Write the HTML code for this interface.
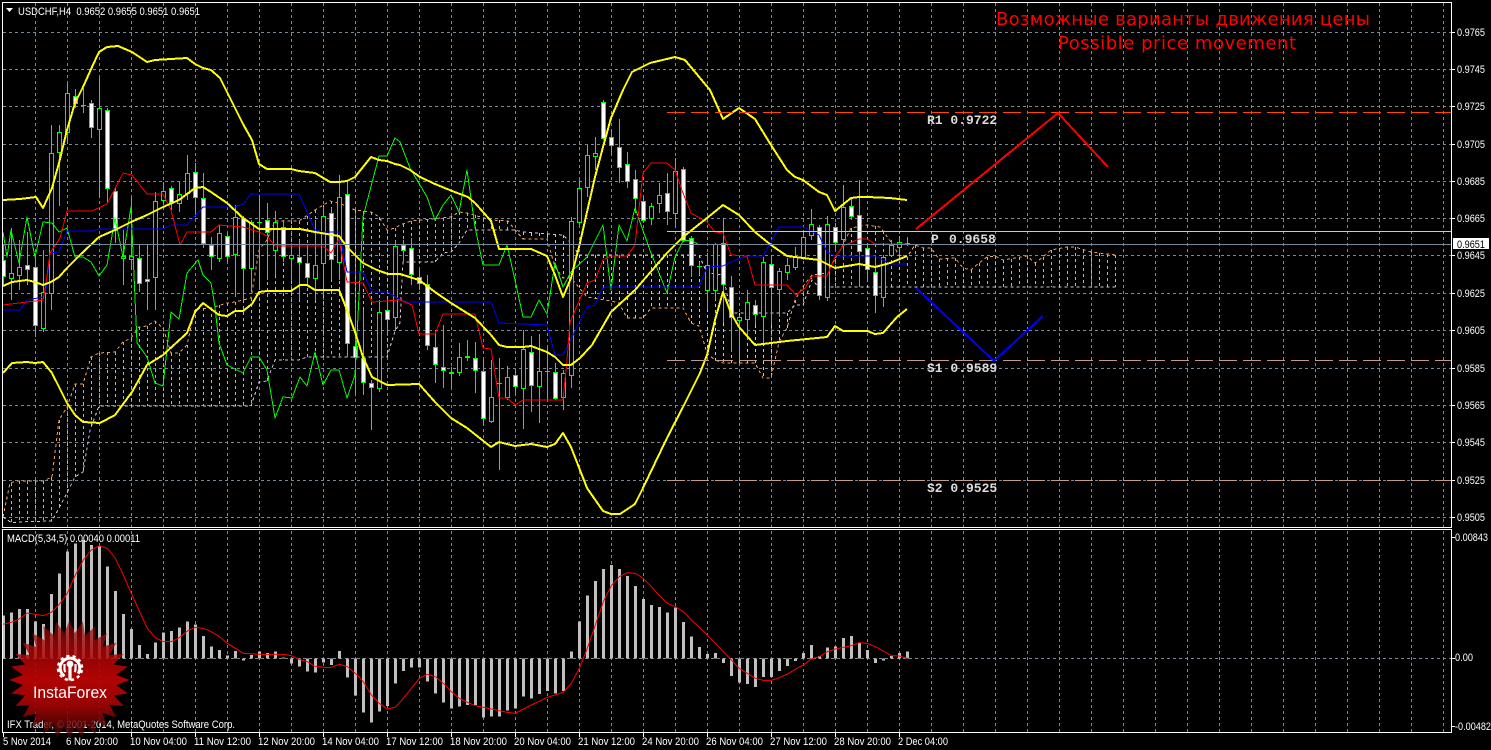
<!DOCTYPE html>
<html><head><meta charset="utf-8"><title>USDCHF,H4</title>
<style>
html,body{margin:0;padding:0;background:#000;width:1491px;height:750px;overflow:hidden}
svg{display:block;position:absolute;left:0;top:0}
text{font-family:"Liberation Sans",sans-serif;font-size:11px;fill:#fff}
.m{font-family:"Liberation Mono",monospace;font-size:13px;font-weight:bold;fill:#dcdcdc}
.g{fill:none;stroke:#778899;stroke-width:1;stroke-dasharray:3 3}
.l{fill:none;stroke-linejoin:round}
.s{fill:none;stroke:#f00;stroke-width:1;vector-effect:non-scaling-stroke;shape-rendering:auto}
</style></head><body>
<svg xmlns="http://www.w3.org/2000/svg" width="1491" height="750" viewBox="0 0 1491 750">
<defs>
<clipPath id="c1"><rect x="3" y="3" width="1448" height="524"/></clipPath>
<clipPath id="c2"><rect x="3" y="530" width="1448" height="202"/></clipPath>
<pattern id="vg" width="32" height="6" patternUnits="userSpaceOnUse" x="35" y="3"><rect width="1" height="3" fill="#778899"/></pattern>
<linearGradient id="lg" x1="0" y1="0" x2="0" y2="1">
<stop offset="0" stop-color="#8a0808" stop-opacity=".62"/>
<stop offset=".22" stop-color="#a80606" stop-opacity=".8"/>
<stop offset=".5" stop-color="#b80404" stop-opacity=".96"/>
<stop offset=".72" stop-color="#a00404" stop-opacity=".92"/>
<stop offset=".9" stop-color="#5a0404" stop-opacity=".8"/>
<stop offset="1" stop-color="#300202" stop-opacity=".6"/>
</linearGradient>
</defs>

<g clip-path="url(#c1)" shape-rendering="crispEdges">
<rect x="35" y="3" width="1410" height="524" fill="url(#vg)"/>
<path class="g" d="M3 32.5H1451M3 69.5H1451M3 106.5H1451M3 144.5H1451M3 181.5H1451M3 218.5H1451M3 255.5H1451M3 293.5H1451M3 330.5H1451M3 368.5H1451M3 405.5H1451M3 442.5H1451M3 480.5H1451M3 517.5H1451"/>

<path fill="none" stroke="#f4a460" stroke-dasharray="3 3" d="M11.5 483V522M19.5 481V522M27.5 481V522M35.5 481V521M43.5 481V521M51.5 477V521M59.5 420V508M67.5 407V493M75.5 384V477M83.5 384V472M91.5 357V427M99.5 353V406M107.5 352V406M115.5 352V406M123.5 342V406M131.5 338V406M139.5 327V406M147.5 326V406M155.5 321V406M163.5 328V406M171.5 353V406M179.5 353V406M187.5 345V406M195.5 309V406M203.5 308V406M211.5 308V406M219.5 305V406M227.5 303V406M235.5 302V406M243.5 300V406M251.5 298V406M259.5 250V382M267.5 240V381M275.5 221V360M283.5 221V360M291.5 221V360M299.5 221V360M307.5 216V357M315.5 210V357M323.5 205V357M331.5 201V357M339.5 203V357M347.5 206V357M355.5 210V357M363.5 211V357M371.5 212V357M379.5 217V357M387.5 230V357M395.5 228V331M403.5 224V262M411.5 221V262M419.5 220V262M427.5 219V262M435.5 218V262M443.5 218V253M451.5 217V252M459.5 212V243M467.5 213V230M475.5 215V230M483.5 218V230M491.5 220V230M499.5 220V230M507.5 221V230M795.5 300V305M803.5 287V305M811.5 276V281M819.5 274V287M827.5 273V287M835.5 259V287M843.5 245V287M851.5 228V287M859.5 226V287M867.5 225V287M875.5 226V287M883.5 231V287M891.5 242V287M899.5 255V287M907.5 257V287M915.5 245V287M923.5 248V287M931.5 248V287M939.5 259V287M947.5 258V287M955.5 258V287M963.5 268V287M971.5 270V287M979.5 263V287M987.5 257V287M995.5 256V287M1003.5 260V287M1011.5 259V287M1019.5 257V287M1027.5 256V287M1035.5 263V287M1043.5 257V287M1051.5 250V287M1059.5 248V287M1067.5 247V287M1075.5 247V287M1083.5 250V287M1091.5 252V287M1099.5 253V287M1107.5 254V287M1115.5 255V287"/>
<path fill="none" stroke="#d8bfd8" stroke-dasharray="3 3" d="M523.5 232V239M531.5 233V239M539.5 233V239M547.5 234V239M555.5 234V267M563.5 235V278M571.5 243V278M579.5 255V287M587.5 255V297M595.5 255V298M603.5 255V299M611.5 255V301M619.5 255V303M627.5 255V318M635.5 255V318M643.5 255V318M651.5 255V308M659.5 255V308M667.5 255V308M675.5 255V308M683.5 255V308M691.5 255V323M699.5 255V326M707.5 273V353M715.5 274V360M723.5 275V363M731.5 313V363M739.5 313V363M747.5 313V363M755.5 313V363M763.5 313V378M771.5 313V378M779.5 313V342M787.5 313V328"/>
<polyline class="l" stroke="#f4a460" stroke-dasharray="3 3" points="3,517 10,483 17,481 43,481 52,477 59,420 67,407 75,384 83,384 91,357 99,353 115,352 123,342 131,338 139,327 147,326 155,321 163,328 167,340 171,353 179,353 187,345 195,309 211,308 227,303 235,302 251,298 259,250 267,240 275,221 299,221 315,210 330,201 339,203 355,210 371,212 379,217 387,230 395,228 400,225 411,221 451,217 459,212 467,213 491,220 508,221 515,230 523,239 547,239 555,267 563,278 571,278 587,297 611,301 619,303 627,318 643,318 651,308 683,308 691,323 699,326 707,353 715,360 723,363 755,363 763,378 771,378 779,342 787,328 795,300 804,285 812,275 827,273 843,245 851,228 867,225 880,227 891,242 899,255 907,257 915,245 923,248 931,248 939,259 955,258 963,268 971,270 979,263 987,257 995,256 1003,260 1027,256 1035,263 1043,257 1051,250 1067,247 1075,247 1091,252 1107,254 1116,255"/>
<polyline class="l" stroke="#d8bfd8" stroke-dasharray="3 3" points="3,517 12,523 17,522 52,521 59,508 67,493 75,477 83,472 90,430 99,406 251,406 259,382 267,381 275,360 299,360 307,357 387,357 395,331 400,323 402,280 403,262 435,262 443,253 451,252 459,243 467,230 515,230 523,232 563,235 571,243 579,255 699,255 707,273 723,275 731,313 787,313 795,305 803,305 812,280 819,287 1116,287"/>

<path fill="none" stroke="#0f0" d="M3.5 245V285M11.5 228V300M19.5 240V290M27.5 232V285M35.5 257V337M43.5 250V332M51.5 125V310M59.5 125V206M67.5 84V144M75.5 89V108M83.5 88V113M91.5 100V138M99.5 78V197M107.5 108V203M115.5 187V243M123.5 230V285M131.5 197V270M139.5 245V292M147.5 245V310M155.5 192V310M163.5 182V205M171.5 186V210M179.5 182V212M187.5 155V200M195.5 163V217M203.5 173V248M211.5 237V270M219.5 225V262M227.5 233V262M235.5 205V297M243.5 216V300M251.5 220V292M259.5 195V290M267.5 203V280M275.5 211V275M283.5 220V262M291.5 245V280M299.5 240V300M307.5 245V285M315.5 220V300M323.5 207V295M331.5 208V280M339.5 175V280M347.5 182V357M355.5 307V393M363.5 310V395M371.5 380V430M379.5 300V392M387.5 300V335M395.5 240V330M403.5 240V262M411.5 238V285M419.5 270V290M427.5 275V350M435.5 330V383M443.5 325V388M451.5 367V388M459.5 343V376M467.5 340V361M475.5 342V393M483.5 360V425M491.5 360V423M499.5 358V470M507.5 366V400M515.5 370V395M523.5 330V429M531.5 336V412M539.5 334V423M547.5 348V400M555.5 363V400M563.5 370V410M571.5 217V388M579.5 180V225M587.5 145V197M595.5 137V170M603.5 100V140M611.5 130V155M619.5 119V183M627.5 152V188M635.5 170V213M643.5 197V223M651.5 203V225M659.5 183V213M667.5 173V225M675.5 158V227M683.5 167V242M691.5 236V277M699.5 262V275M707.5 253V310M715.5 243V300M723.5 218V323M731.5 276V352M739.5 315V360M747.5 290V340M755.5 300V325M763.5 257V343M771.5 255V325M779.5 268V317M787.5 258V280M795.5 247V270M803.5 230V260M811.5 209V240M819.5 225V300M827.5 216V301M835.5 223V250M843.5 185V260M851.5 198V220M859.5 180V287M867.5 245V282M875.5 257V313M883.5 255V307M891.5 240V256M899.5 236V255M907.5 237V246M81 105.5h5M257 222.5h5M497 383.5h5M545 371.5h5M697 266.5h5M905 243.5h5"/>
<path fill="#fff" stroke="#0f0" d="M1.5 260.5h4v16h-4zM25.5 265.5h4v4h-4zM33.5 267.5h4v58h-4zM73.5 96.5h4v7h-4zM89.5 103.5h4v24h-4zM105.5 110.5h4v78h-4zM113.5 191.5h4v39h-4zM137.5 258.5h4v25h-4zM145.5 279.5h4v2h-4zM169.5 188.5h4v14h-4zM193.5 172.5h4v25h-4zM201.5 198.5h4v45h-4zM209.5 245.5h4v11h-4zM225.5 236.5h4v20h-4zM241.5 218.5h4v50h-4zM265.5 220.5h4v12h-4zM281.5 227.5h4v29h-4zM297.5 257.5h4v5h-4zM305.5 263.5h4v14h-4zM329.5 213.5h4v46h-4zM345.5 194.5h4v149h-4zM353.5 346.5h4v11h-4zM361.5 358.5h4v24h-4zM369.5 383.5h4v4h-4zM385.5 310.5h4v9h-4zM401.5 245.5h4v5h-4zM409.5 248.5h4v26h-4zM417.5 277.5h4v6h-4zM425.5 284.5h4v61h-4zM433.5 347.5h4v17h-4zM441.5 367.5h4v3h-4zM449.5 372.5h4v1h-4zM465.5 356.5h4v1h-4zM473.5 358.5h4v12h-4zM481.5 371.5h4v47h-4zM513.5 375.5h4v11h-4zM529.5 352.5h4v33h-4zM553.5 372.5h4v26h-4zM601.5 102.5h4v36h-4zM609.5 137.5h4v8h-4zM617.5 147.5h4v20h-4zM625.5 164.5h4v17h-4zM633.5 179.5h4v19h-4zM641.5 201.5h4v19h-4zM665.5 193.5h4v18h-4zM681.5 169.5h4v71h-4zM689.5 238.5h4v27h-4zM721.5 243.5h4v41h-4zM729.5 287.5h4v30h-4zM753.5 305.5h4v9h-4zM769.5 264.5h4v23h-4zM817.5 227.5h4v68h-4zM833.5 227.5h4v15h-4zM849.5 206.5h4v10h-4zM857.5 215.5h4v36h-4zM865.5 248.5h4v21h-4zM873.5 272.5h4v23h-4z"/>
<path fill="#000" stroke="#0f0" d="M9.5 273.5h4v5h-4zM17.5 267.5h4v8h-4zM41.5 292.5h4v36h-4zM49.5 153.5h4v140h-4zM57.5 132.5h4v20h-4zM65.5 93.5h4v39h-4zM97.5 108.5h4v21h-4zM121.5 256.5h4v2h-4zM129.5 256.5h4v3h-4zM153.5 201.5h4v76h-4zM161.5 191.5h4v9h-4zM177.5 194.5h4v9h-4zM185.5 173.5h4v20h-4zM217.5 233.5h4v25h-4zM233.5 217.5h4v37h-4zM249.5 222.5h4v46h-4zM273.5 222.5h4v28h-4zM289.5 255.5h4v3h-4zM313.5 265.5h4v13h-4zM321.5 216.5h4v47h-4zM337.5 197.5h4v65h-4zM377.5 312.5h4v76h-4zM393.5 246.5h4v71h-4zM457.5 357.5h4v15h-4zM489.5 397.5h4v24h-4zM505.5 377.5h4v20h-4zM521.5 349.5h4v39h-4zM537.5 371.5h4v15h-4zM561.5 373.5h4v24h-4zM569.5 221.5h4v154h-4zM577.5 188.5h4v34h-4zM585.5 155.5h4v32h-4zM593.5 153.5h4v3h-4zM649.5 206.5h4v12h-4zM657.5 195.5h4v8h-4zM673.5 171.5h4v42h-4zM705.5 265.5h4v25h-4zM713.5 244.5h4v46h-4zM737.5 317.5h4v3h-4zM745.5 302.5h4v17h-4zM761.5 262.5h4v54h-4zM777.5 271.5h4v18h-4zM785.5 265.5h4v7h-4zM793.5 257.5h4v10h-4zM801.5 237.5h4v20h-4zM809.5 224.5h4v11h-4zM825.5 224.5h4v73h-4zM841.5 207.5h4v32h-4zM881.5 257.5h4v40h-4zM889.5 245.5h4v10h-4zM897.5 242.5h4v5h-4z"/>

<polyline class="l" stroke="#0f0" points="3,232 7,257 11,230 19,263 27,217 35,257 43,222 52,223 59,232 67,228 75,257 83,257 91,262 99,276 107,265 115,218 123,257 131,207 137,343 147,357 155,383 163,386 171,312 179,319 187,273 198,260 203,275 211,283 215,307 219,343 227,365 243,373 251,357 259,357 267,370 275,418 283,397 292,398 300,377 307,386 315,352 323,385 331,370 339,370 347,398 355,375 363,217 379,156 387,156 395,138 400,142 410,168 427,197 435,220 443,205 451,195 459,212 467,170 475,227 483,265 499,265 507,245 515,280 523,317 531,317 539,300 547,314 555,263 563,287 571,272 587,257 603,225 611,290 619,225 627,241 635,208 651,253 667,293 675,257 683,241 691,240 699,245"/>
<polyline class="l" stroke="#00f" points="3,310 20,310 27,300 43,297 46,290 50,253 59,252 67,231 92,231 99,229 163,229 171,225 187,225 203,207 235,207 243,204 251,194 299,194 315,230 323,232 339,232 347,272 363,272 372,292 388,292 400,300 407,302 491,302 499,323 547,325 555,355 563,355 587,307 595,305 603,287 699,287 707,267 723,266 731,262 747,256 763,256 779,227 803,227 819,235 827,252 835,256 875,256 883,260 890,264 907,264"/>
<polyline class="l" stroke="#f00" points="3,305 43,300 45,290 50,253 60,238 67,211 92,211 107,204 123,173 132,175 147,194 163,194 171,210 180,245 187,232 211,232 219,225 243,227 259,232 267,236 275,246 323,246 331,253 339,239 347,282 363,283 372,302 400,300 412,305 419,334 435,334 443,314 475,314 483,348 491,349 499,398 507,398 515,405 523,400 563,400 567,360 570,322 587,283 595,280 603,260 611,256 627,256 635,245 643,173 651,163 667,163 675,170 683,193 691,213 707,222 715,232 723,233 731,255 747,256 755,285 787,285 796,295 805,288 812,276 827,276 835,257 843,246 859,239 867,239 875,244 907,244"/>
<polyline class="l" stroke="#ff0" stroke-width="2" points="3,200 20,199 36,197 43,208 52,188 59,163 67,130 75,103 83,87 92,67 99,52 107,47 118,46 132,52 147,62 155,60 171,59 187,58 195,64 203,68 211,70 220,78 227,92 235,108 243,124 252,140 259,164 267,169 291,169 299,171 307,172 315,173 330,182 339,182 347,181 355,177 371,157 379,160 387,161 395,164 400,165 410,170 420,177 435,184 452,191 468,197 475,203 483,212 491,221 499,249 531,249 547,256 555,275 563,297 571,278 579,247 587,212 595,177 603,147 611,118 623,90 632,72 650,63 675,57 685,60 695,72 710,90 723,119 739,108 755,119 771,145 787,170 795,177 803,180 819,192 827,195 835,211 851,198 859,197 867,197 890,198 907,200"/>
<polyline class="l" stroke="#ff0" stroke-width="2" points="3,286 12,282 27,280 35,282 43,285 51,282 59,277 67,268 80,255 99,237 115,230 131,222 147,215 163,207 179,200 195,188 203,187 211,192 227,203 243,218 259,229 300,229 315,232 339,236 347,247 363,263 377,270 388,274 400,274 419,280 435,292 451,303 467,313 475,318 491,335 499,345 507,347 523,347 531,346 547,352 555,357 563,365 571,365 580,358 592,345 611,312 635,290 667,253 683,237 707,218 723,205 739,215 755,232 771,245 787,256 803,258 819,260 835,268 859,264 875,267 890,263 907,256"/>
<polyline class="l" stroke="#ff0" stroke-width="2" points="3,373 12,363 27,362 35,363 43,362 52,373 67,403 75,415 83,422 100,423 115,415 132,392 147,365 163,355 187,333 195,312 203,303 211,309 219,315 227,316 235,311 243,311 252,304 259,292 267,291 291,291 300,285 307,285 315,290 339,290 347,310 355,332 363,357 372,377 387,385 419,384 435,402 451,418 467,428 491,447 499,442 515,446 531,444 547,447 555,444 563,433 571,447 587,488 603,511 611,514 620,514 635,504 643,488 667,438 683,407 700,373 707,355 715,320 723,292 731,313 739,327 755,345 771,343 787,341 827,337 835,326 843,331 867,331 875,334 883,333 897,317 907,309"/>

<path stroke="#778899" d="M3 244.5H1451"/>
<path stroke="#ffd700" d="M667 231.5H1451"/>
<path stroke="#ff4500" stroke-dasharray="18 6" d="M667 112.5H1451"/>
<path stroke="#c49a8c" stroke-dasharray="18 6" d="M667 360.5H1451M667 480.5H1451"/>
<polyline class="l" stroke="#f00" stroke-width="2" points="916,229 1058,113 1108,167"/>
<polyline class="l" stroke="#00f" stroke-width="2" points="916,288 994,361 1043,316"/>
</g>

<g clip-path="url(#c2)" shape-rendering="crispEdges">
<rect x="35" y="530" width="1410" height="202" fill="url(#vg)"/>
<path class="g" d="M3 658.5H1451"/>
<path transform="translate(0 525) scale(.33333)" fill="none" stroke="#c0c0c0" stroke-width="9" d="M10.5 400V272M34.5 400V262M58.5 400V252M82.5 400V252M106.5 400V290M130.5 400V297M154.5 400V207M178.5 400V145M202.5 400V80M226.5 400V55M250.5 400V45M274.5 400V60M298.5 400V65M322.5 400V125M346.5 400V198M370.5 400V267M394.5 400V312M418.5 400V360M442.5 400V387M466.5 400V353M490.5 400V323M514.5 400V318M538.5 400V308M562.5 400V290M586.5 400V298M610.5 400V333M634.5 400V365M658.5 400V375M682.5 400V392M706.5 400V378M730.5 400V407M754.5 400V390M778.5 400V380M802.5 400V384M826.5 400V380M850.5 400V398M874.5 400V415M898.5 400V425M922.5 400V440M946.5 400V443M970.5 400V412M994.5 400V420M1018.5 400V378M1042.5 400V458M1066.5 400V512M1090.5 400V563M1114.5 400V593M1138.5 400V560M1162.5 400V543M1186.5 400V476M1210.5 400V438M1234.5 400V428M1258.5 400V428M1282.5 400V470M1306.5 400V506M1330.5 400V533M1354.5 400V550M1378.5 400V545M1402.5 400V540M1426.5 400V540M1450.5 400V577M1474.5 400V575M1498.5 400V575M1522.5 400V557M1546.5 400V550M1570.5 400V515M1594.5 400V520M1618.5 400V507M1642.5 400V498M1666.5 400V506M1690.5 400V498M1714.5 400V380M1738.5 400V290M1762.5 400V212M1786.5 400V168M1810.5 400V132M1834.5 400V120M1858.5 400V132M1882.5 400V153M1906.5 400V183M1930.5 400V222M1954.5 400V240M1978.5 400V246M2002.5 400V263M2026.5 400V248M2050.5 400V291M2074.5 400V335M2098.5 400V366M2122.5 400V387M2146.5 400V384M2170.5 400V414M2194.5 400V453M2218.5 400V473M2242.5 400V477M2266.5 400V486M2290.5 400V456M2314.5 400V456M2338.5 400V438M2362.5 400V423M2386.5 400V408M2410.5 400V384M2434.5 400V360M2458.5 400V393M2482.5 400V368M2506.5 400V365M2530.5 400V339M2554.5 400V333M2578.5 400V353M2602.5 400V375M2626.5 400V414M2650.5 400V407M2674.5 400V393M2698.5 400V384M2722.5 400V380"/>
<polyline class="s" transform="translate(0 525) scale(.33333)" points="8,298 34,292 58,282 82,264 106,268 130,272 154,262 178,238 202,205 226,150 250,105 274,75 298,62 322,70 346,100 370,150 394,205 418,258 442,310 466,338 490,350 514,350 538,338 562,318 586,307 610,310 634,320 658,335 682,355 730,385 778,388 850,388 874,392 898,403 922,410 946,425 990,428"/>
<polyline class="s" transform="translate(330 525) scale(.33333)" points="0,428 28,418 52,425 76,445 100,470 124,510 148,535 172,552 196,547 220,520 244,490 268,460 292,448 316,455 340,475 364,500 388,520 412,532 436,542 484,552 532,562 556,565 604,540 652,517 700,502 724,475 748,430 772,370 796,300 820,230 844,182 868,155 892,143 916,145 940,160 964,185 988,212"/>
<polyline class="s" transform="translate(660 525) scale(.33333)" points="-2,212 22,235 46,245 70,260 94,285 118,307 142,330 166,355 190,380 214,405 238,430 262,445 286,460 310,466 334,466 358,458 382,447 406,433 430,420 454,402 478,395 502,380 526,372 550,367 574,362 598,353 622,355 646,365 670,378 694,392 718,393 742,400"/>
</g>

<g shape-rendering="crispEdges" fill="none" stroke="#fff">
<rect x="2.5" y="2.5" width="1449" height="525"/>
<rect x="2.5" y="529.5" width="1449" height="203"/>
<path d="M1451 32.5h4M1451 69.5h4M1451 106.5h4M1451 144.5h4M1451 181.5h4M1451 218.5h4M1451 255.5h4M1451 293.5h4M1451 330.5h4M1451 368.5h4M1451 405.5h4M1451 442.5h4M1451 480.5h4M1451 517.5h4M1451 537.5h4M1451 658.5h4M1451 726.5h4M3.5 732v5M131.5 732v5M195.5 732v5M259.5 732v5M323.5 732v5M387.5 732v5M451.5 732v5M515.5 732v5M579.5 732v5M643.5 732v5M707.5 732v5M771.5 732v5M835.5 732v5M899.5 732v5"/>
</g>

<text x="18" y="15" textLength="182" lengthAdjust="spacingAndGlyphs" xml:space="preserve">USDCHF,H4  0.9652 0.9655 0.9651 0.9651</text>
<polygon points="6,8 13,8 9.5,12" fill="#fff"/>

<text x="996" y="25" textLength="374" lengthAdjust="spacing" style="font-family:'DejaVu Sans',sans-serif;font-size:18px;fill:#f00">Возможные варианты движения цены</text>
<text x="1058" y="49" textLength="238" lengthAdjust="spacing" style="font-family:'DejaVu Sans',sans-serif;font-size:18px;fill:#f00">Possible price movement</text>

<text class="m" x="927" y="124">R1 0.9722</text>
<text class="m" y="243"><tspan x="931">P</tspan><tspan x="949">0.9658</tspan></text>
<text class="m" x="927" y="372">S1 0.9589</text>
<text class="m" x="927" y="492">S2 0.9525</text>

<text x="1457" y="36" textLength="28" lengthAdjust="spacingAndGlyphs">0.9765</text>
<text x="1457" y="73" textLength="28" lengthAdjust="spacingAndGlyphs">0.9745</text>
<text x="1457" y="110" textLength="28" lengthAdjust="spacingAndGlyphs">0.9725</text>
<text x="1457" y="148" textLength="28" lengthAdjust="spacingAndGlyphs">0.9705</text>
<text x="1457" y="185" textLength="28" lengthAdjust="spacingAndGlyphs">0.9685</text>
<text x="1457" y="222" textLength="28" lengthAdjust="spacingAndGlyphs">0.9665</text>
<text x="1457" y="259" textLength="28" lengthAdjust="spacingAndGlyphs">0.9645</text>
<text x="1457" y="297" textLength="28" lengthAdjust="spacingAndGlyphs">0.9625</text>
<text x="1457" y="334" textLength="28" lengthAdjust="spacingAndGlyphs">0.9605</text>
<text x="1457" y="372" textLength="28" lengthAdjust="spacingAndGlyphs">0.9585</text>
<text x="1457" y="409" textLength="28" lengthAdjust="spacingAndGlyphs">0.9565</text>
<text x="1457" y="446" textLength="28" lengthAdjust="spacingAndGlyphs">0.9545</text>
<text x="1457" y="484" textLength="28" lengthAdjust="spacingAndGlyphs">0.9525</text>
<text x="1457" y="521" textLength="28" lengthAdjust="spacingAndGlyphs">0.9505</text>
<rect x="1453" y="238" width="36" height="11" fill="#fff"/>
<text x="1457" y="248" textLength="28" lengthAdjust="spacingAndGlyphs" style="fill:#000">0.9651</text>

<text x="1455" y="541" textLength="33" lengthAdjust="spacingAndGlyphs">0.00843</text>
<text x="1455" y="661" textLength="18" lengthAdjust="spacingAndGlyphs">0.00</text>
<text x="1455" y="730" textLength="36" lengthAdjust="spacingAndGlyphs">-0.00482</text>

<text x="7" y="542" textLength="133" lengthAdjust="spacingAndGlyphs">MACD(5,34,5) 0.00040 0.00011</text>
<text x="7" y="728" textLength="228" lengthAdjust="spacingAndGlyphs">IFX Trader, © 2001-2014, MetaQuotes Software Corp.</text>

<text x="3" y="745" textLength="48" lengthAdjust="spacingAndGlyphs">5 Nov 2014</text>
<text x="66" y="745" textLength="52" lengthAdjust="spacingAndGlyphs">6 Nov 20:00</text>
<text x="130" y="745" textLength="57" lengthAdjust="spacingAndGlyphs">10 Nov 04:00</text>
<text x="194" y="745" textLength="57" lengthAdjust="spacingAndGlyphs">11 Nov 12:00</text>
<text x="258" y="745" textLength="57" lengthAdjust="spacingAndGlyphs">12 Nov 20:00</text>
<text x="322" y="745" textLength="57" lengthAdjust="spacingAndGlyphs">14 Nov 04:00</text>
<text x="386" y="745" textLength="57" lengthAdjust="spacingAndGlyphs">17 Nov 12:00</text>
<text x="450" y="745" textLength="57" lengthAdjust="spacingAndGlyphs">18 Nov 20:00</text>
<text x="514" y="745" textLength="57" lengthAdjust="spacingAndGlyphs">20 Nov 04:00</text>
<text x="578" y="745" textLength="57" lengthAdjust="spacingAndGlyphs">21 Nov 12:00</text>
<text x="642" y="745" textLength="57" lengthAdjust="spacingAndGlyphs">24 Nov 20:00</text>
<text x="706" y="745" textLength="57" lengthAdjust="spacingAndGlyphs">26 Nov 04:00</text>
<text x="770" y="745" textLength="57" lengthAdjust="spacingAndGlyphs">27 Nov 12:00</text>
<text x="834" y="745" textLength="57" lengthAdjust="spacingAndGlyphs">28 Nov 20:00</text>
<text x="898" y="745" textLength="50" lengthAdjust="spacingAndGlyphs">2 Dec 04:00</text>

<polygon transform="translate(69.5 680)" fill="url(#lg)" points="0,-60 5.26,-46.7 13.35,-58.5 15.52,-44.36 26.03,-54.06 25,-39.8 37.41,-46.91 33.23,-33.23 46.91,-37.41 39.8,-25 54.06,-26.03 44.36,-15.52 58.5,-13.35 46.7,-5.26 60,0 46.7,5.26 58.5,13.35 44.36,15.52 54.06,26.03 39.8,25 46.91,37.41 33.23,33.23 37.41,46.91 25,39.8 26.03,54.06 15.52,44.36 13.35,58.5 5.26,46.7 0,60 -5.26,46.7 -13.35,58.5 -15.52,44.36 -26.03,54.06 -25,39.8 -37.41,46.91 -33.23,33.23 -46.91,37.41 -39.8,25 -54.06,26.03 -44.36,15.52 -58.5,13.35 -46.7,5.26 -60,0 -46.7,-5.26 -58.5,-13.35 -44.36,-15.52 -54.06,-26.03 -39.8,-25 -46.91,-37.41 -33.23,-33.23 -37.41,-46.91 -25,-39.8 -26.03,-54.06 -15.52,-44.36 -13.35,-58.5 -5.26,-46.7"/>
<g transform="translate(70 668)" fill="none" stroke="#fff">
<circle r="12" stroke-width="2.5" stroke-dasharray="3.1 3.2" transform="rotate(10)"/>
<circle r="9.8" stroke-width="3" stroke-dasharray="46 15.6" transform="rotate(124)"/>
<circle cy="-4" r="3.4" fill="#fff" stroke="none"/>
<path d="M0,-4V12.5" stroke-width="3.2"/>
<path d="M-5.5,-4V1Q-5.5,3-4.5,4M5.5,-4V1Q5.5,3 4.5,4" stroke-width="2.2"/>
</g>
<text x="33" y="698" textLength="74" lengthAdjust="spacingAndGlyphs" style="font-size:17px">InstaForex</text>
</svg>
</body></html>
